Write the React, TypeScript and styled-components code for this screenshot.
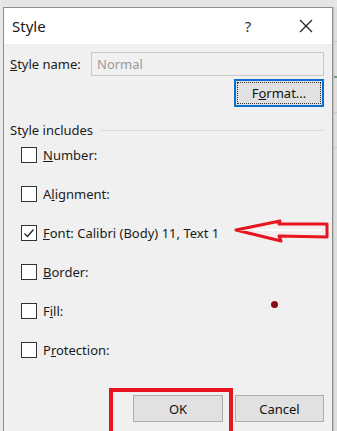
import React from "react";
import styled, { createGlobalStyle } from "styled-components";

const GlobalStyle = createGlobalStyle`
  html, body {
    margin: 0;
    padding: 0;
    background: #e6e6e6;
    overflow: hidden;
  }
  body {
    font-family: "Noto Sans", "Open Sans", Arial, sans-serif;
    color: #1b1b1b;
  }
`;

const Screen = styled.div`
  width: 337px;
  height: 431px;
  display: flex;
  padding-top: 7px;
  box-sizing: border-box;
`;

const LeftEdge = styled.div`
  width: 3px;
  background: #e9e9e9;
`;

const RightEdge = styled.div`
  flex: 1;
  background: #dedede;
  border-left: 1px solid #c4c4c4;
  display: flex;
  flex-direction: column;
  .cell {
    height: 34px;
    border-bottom: 1px solid #c8c8c8;
  }
  .cell.green {
    border-bottom: 2px solid #6aa27a;
  }
`;

const Dialog = styled.div`
  width: 328px;
  height: 424px;
  border: 1px solid #8d8d8d;
  border-bottom: none;
  background: #f0f0f0;
  display: flex;
  flex-direction: column;
  position: relative;
`;

const TitleBar = styled.div`
  height: 36px;
  background: #ffffff;
  display: flex;
  align-items: center;
  padding-left: 8px;
  .title {
    flex: 1;
    font-size: 15px;
    color: #1a1a1a;
  }
  .help {
    font-size: 15px;
    width: 20px;
    text-align: center;
    color: #333;
    margin-right: 40px;
  }
  .close {
    width: 16px;
    height: 16px;
    margin-right: 18px;
    display: flex;
  }
`;

const Body = styled.div`
  flex: 1;
  display: flex;
  flex-direction: column;
  padding: 8px 8px 0 6px;
  font-size: 13px;
`;

const NameRow = styled.div`
  display: flex;
  align-items: center;
  height: 24px;
  label {
    width: 81px;
  }
`;

const NameInput = styled.div`
  flex: 1;
  height: 22px;
  border: 1px solid #c8c8c8;
  background: #f0f0f0;
  color: #9a9a9a;
  display: flex;
  align-items: center;
  padding-left: 5px;
`;

const ButtonRow = styled.div<{ $top: number }>`
  display: flex;
  justify-content: flex-end;
  gap: 12px;
  margin-top: ${(p) => p.$top}px;
`;

const Button = styled.div<{ $focused?: boolean; $w?: number }>`
  position: relative;
  width: ${(p) => p.$w ?? 90}px;
  height: ${(p) => (p.$focused ? 28 : 27)}px;
  box-sizing: border-box;
  background: #e1e1e1;
  border: ${(p) => (p.$focused ? "2px solid #0a6fd0" : "1px solid #adadad")};
  display: flex;
  align-items: center;
  justify-content: center;
  font-size: 13px;
  color: #111;
  &::after {
    content: "";
    display: ${(p) => (p.$focused ? "block" : "none")};
    position: absolute;
    inset: 1px;
    border: 1px dotted #333;
  }
`;

const Highlight = styled.div`
  position: absolute;
  left: -25px;
  right: -11px;
  top: -8px;
  bottom: -14px;
  border: 4px solid #e8141f;
  pointer-events: none;
`;

const Section = styled.div`
  display: flex;
  align-items: center;
  gap: 8px;
  margin-top: 14px;
  height: 18px;
  &::after {
    content: "";
    flex: 1;
    height: 1px;
    background: #d9d9d9;
  }
`;

const Options = styled.div`
  display: flex;
  flex-direction: column;
  gap: 23px;
  margin-top: 8px;
  padding-left: 11px;
`;

const Option = styled.div`
  position: relative;
  display: flex;
  align-items: center;
  gap: 6px;
  height: 16px;
`;

const Box = styled.div`
  width: 14px;
  height: 14px;
  border: 1px solid #333;
  background: #fff;
  display: flex;
  align-items: center;
  justify-content: center;
`;

const Arrow = styled.svg`
  position: absolute;
  left: 213px;
  top: -6px;
`;

const Dot = styled.div`
  position: absolute;
  left: 267px;
  top: 293px;
  width: 7px;
  height: 7px;
  border-radius: 50%;
  background: #8a0a12;
`;

const Key = ({ text, at }: { text: string; at: number }) => (
  <span>
    {text.slice(0, at)}
    <u>{text[at]}</u>
    {text.slice(at + 1)}
  </span>
);

const options = [
  { label: "Number:", key: 0, checked: false },
  { label: "Alignment:", key: 1, checked: false },
  { label: "Font: Calibri (Body) 11, Text 1", key: 0, checked: true },
  { label: "Border:", key: 0, checked: false },
  { label: "Fill:", key: 1, checked: false },
  { label: "Protection:", key: 1, checked: false },
];

export default function App() {
  return (
    <>
      <GlobalStyle />
      <Screen>
        <LeftEdge />
        <Dialog>
          <TitleBar>
            <span className="title">Style</span>
            <span className="help">?</span>
            <svg className="close" viewBox="0 0 16 16">
              <path d="M2 2 L14 14 M14 2 L2 14" stroke="#222" strokeWidth="1.2" fill="none" />
            </svg>
          </TitleBar>
          <Body>
            <NameRow>
              <label>
                <Key text="Style name:" at={0} />
              </label>
              <NameInput>Normal</NameInput>
            </NameRow>
            <ButtonRow $top={3}>
              <Button $focused>
                <Key text="Format..." at={1} />
              </Button>
            </ButtonRow>
            <Section>Style includes</Section>
            <Options>
              {options.map((o) => (
                <Option key={o.label}>
                  <Box>
                    {o.checked && (
                      <svg width="12" height="12" viewBox="0 0 12 12">
                        <path d="M1.5 6.5 L4.5 9.5 L10.5 2.5" stroke="#222" strokeWidth="1.3" fill="none" />
                      </svg>
                    )}
                  </Box>
                  <Key text={o.label} at={o.key} />
                  {o.checked && (
                    <Arrow width="96" height="24" viewBox="0 0 96 24">
                      <path
                        d="M2 11 L46 2 L45 5 L93 5 L93 18 L45 17 L47 22 Z"
                        fill="#f3eeee"
                        stroke="#e8141f"
                        strokeWidth="3"
                        strokeLinejoin="round"
                      />
                      <path d="M20 11 L88 11" stroke="#ffffff" strokeWidth="2" />
                    </Arrow>
                  )}
                </Option>
              ))}
            </Options>
            <ButtonRow $top={37}>
              <Button>
                OK
                <Highlight />
              </Button>
              <Button $w={89}>Cancel</Button>
            </ButtonRow>
          </Body>
          <Dot />
        </Dialog>
        <RightEdge>
          <div className="cell" />
          <div className="cell green" />
          <div className="cell" />
          <div className="cell" />
        </RightEdge>
      </Screen>
    </>
  );
}
